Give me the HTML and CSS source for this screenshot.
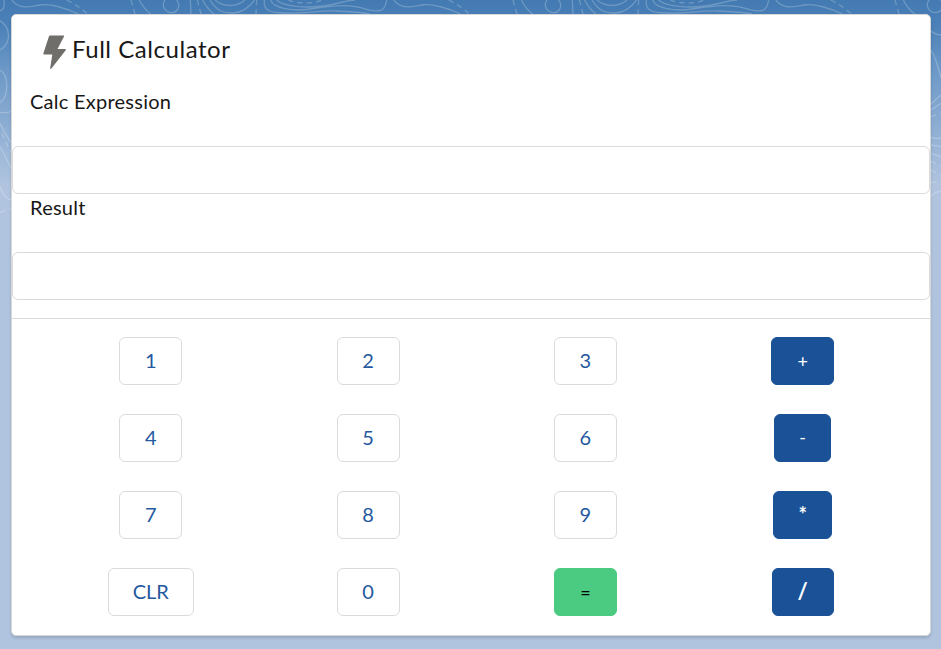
FILE: index.html
```html
<!DOCTYPE html>
<html lang="en">
<head>
<meta charset="utf-8">
<title>Full Calculator</title>
<link rel="stylesheet" href="styles.css">
</head>
<body>
<svg class="contours" width="941" height="649" aria-hidden="true">
  <defs>
    <g id="tile">
      <path d="M35 0C60 30 90 20 120 15S200 25 235 42M418 0Q430 25 452 42M495 0C480 20 500 38 515 38S545 20 530 0M571 0L573 42M608 0Q620 25 642 42M630 0C650 35 675 40 700 39S745 25 764 0M645 0C670 22 710 22 735 0M793 0C790 25 800 38 850 39C920 42 960 30 1010 33S1080 36 1110 42M812 0C820 25 880 35 930 27S1040 10 1090 25S1155 35 1160 0M830 0C850 20 920 25 970 18S1040 0 1065 0"/>
      <path class="dashed" d="M200 0Q240 20 262 42M393 0L405 42M592 0L603 42M770 0L768 42M865 0C890 12 940 12 965 0"/>
    </g>
  </defs>
  <g transform="scale(.33333)">
    <use href="#tile"/>
    <use href="#tile" x="1146"/>
    <use href="#tile" x="2292"/>
    <path d="M0 32Q15 32 12 0M0 62C34 85 34 130 0 150M0 210C27 225 27 290 0 308M0 338H22Q30 338 35 330M0 370Q12 400 35 430M0 440L35 507M0 560Q12 597 35 600"/>
    <path class="dashed" d="M5 400L35 460M0 637L35 625"/>
    <path d="M2790 90Q2805 105 2823 105M2792 150C2808 170 2816 205 2823 235M2793 312L2823 285M2793 330L2823 310M2793 412Q2808 418 2823 414M2793 435L2823 440M2793 460L2823 470M2793 590Q2805 574 2823 574"/>
    <path class="dashed" d="M2793 350L2823 340M2793 485L2823 497M2793 510L2823 525M2793 548L2823 545"/>
  </g>
</svg>
<main class="card">
  <header class="card-header">
    <svg class="bolt" width="24" height="35" viewBox="0 0 24 35" aria-hidden="true"><path d="M7 .5H20.5Q21.6.5 21 1.5L14.5 14H22Q23.5 14 22.7 15.3L8.2 33.7Q7.2 34.5 7.2 33L9.3 19.5H1.3Q0 19.5.4 18.2L6 1.3Q6.3.5 7 .5Z"/></svg>
    <h1>Full Calculator</h1>
  </header>
  <label class="field"><span>Calc Expression</span><input type="text"></label>
  <label class="field"><span>Result</span><input type="text"></label>
  <section class="keys">
    <button>1</button><button>2</button><button>3</button><button class="operator plus">+</button>
    <button>4</button><button>5</button><button>6</button><button class="operator minus">-</button>
    <button>7</button><button>8</button><button>9</button><button class="operator times">*</button>
    <button class="clear">CLR</button><button>0</button><button class="equals">=</button><button class="operator divide">/</button>
  </section>
</main>
</body>
</html>
```

FILE: styles.css
```css
* { box-sizing: border-box; }

body {
  margin: 0;
  height: 649px;
  padding: 14px 10px 13px 11px;
  overflow: hidden;
  background: #b0c4df linear-gradient(#437ab1 0, #4b81b8 25px, #6c98c7 70px, #b0c4df 185px);
  font-family: Lato, "Open Sans", sans-serif;
  color: #181717;
}

.contours {
  position: absolute;
  inset: 0;
  z-index: -1;
  fill: none;
  stroke: rgba(255, 255, 255, .22);
  stroke-width: 4;
}

.dashed { stroke-dasharray: 16 12; }

.card {
  height: 622px;
  border: 1px solid #d8d8d8;
  border-radius: 5px;
  background: #fff;
  box-shadow: 0 2px 3px rgba(0, 0, 0, .15);
}

.card-header {
  display: flex;
  height: 71px;
  padding: 19px 0 0 30.5px;
  gap: 5.5px;
}

.bolt {
  margin-top: 1px;
  fill: #706e6b;
}

h1 {
  margin: 0;
  font-size: 24px;
  font-weight: 400;
  line-height: 30px;
  letter-spacing: .55px;
}

.field {
  display: block;
  height: 106px;
  font-size: 20px;
}

.field span {
  display: block;
  height: 60px;
  padding: 0 18px;
  line-height: 30px;
  letter-spacing: .25px;
}

.field input {
  display: block;
  width: 100%;
  height: 48px;
  border: 1px solid #dddbda;
  border-radius: 6px;
  background: #fff;
}

.keys {
  display: grid;
  grid-template-columns: repeat(4, 1fr);
  grid-auto-rows: 48px;
  row-gap: 29px;
  justify-items: center;
  margin-top: 20px;
  padding: 18px 18.65px 0 30.15px;
  border-top: 1px solid #dddbda;
}

button {
  width: 63px;
  padding: 0 0 2px;
  border: 1px solid #dddbda;
  border-radius: 6px;
  background: #fff;
  color: #2459a0;
  font: 400 20px/44px Lato, sans-serif;
}

.clear { width: 86px; }

.operator {
  border-color: #1b5297;
  background: #1b5297;
  color: #fff;
}

.plus {
  padding: 0;
  font-size: 18px;
}

.minus {
  width: 57px;
  font-size: 18px;
}

.times {
  width: 59px;
  font-weight: 700;
}

.divide {
  width: 62px;
  font-size: 22px;
  font-weight: 700;
}

.equals {
  padding: 0;
  border-color: #4bca81;
  background: #4bca81;
  color: #080707;
  font-size: 18px;
}
```
